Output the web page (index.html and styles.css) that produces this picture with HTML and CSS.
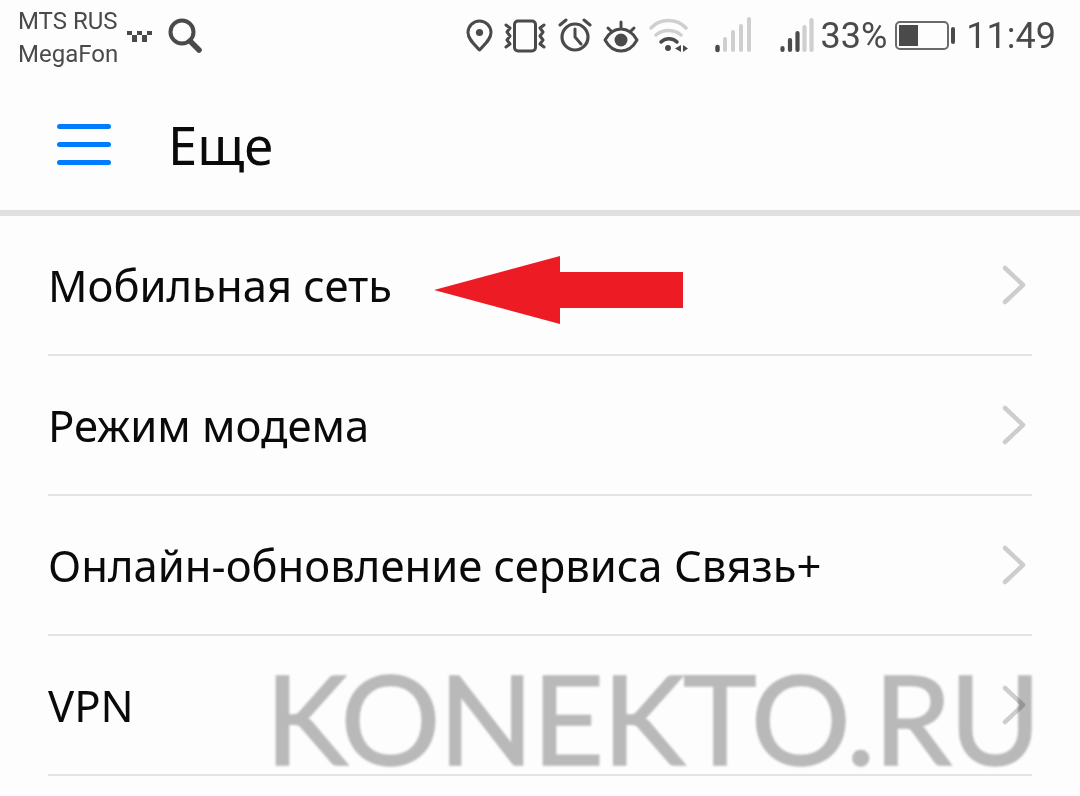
FILE: index.html
```html
<!doctype html>
<html lang="ru">
<head>
	<meta charset="UTF-8">
	<title>Еще</title>
	<link rel="stylesheet" href="styles.css">
</head>
<body>
	<div class="page">
		<div class="status">
			<div class="status-left">
				<div class="carrier">MTS RUS<br>MegaFon</div>
				<svg class="ic taxi" width="25" height="40" viewBox="0 0 25 40">
					<path fill="#4a4a4a" d="M0 15h5v4H0zM10 15h5v4h-5zM20 15h5v4h-5zM5 19h5v4H5zM15 19h5v4h-5zM5 23h5v3H5zM15 23h5v3h-5z"/>
				</svg>
				<svg class="ic search" width="34" height="40" viewBox="0 1 34 40">
					<circle cx="14" cy="17" r="11.500" fill="none" stroke="#4a4a4a" stroke-width="4"/>
					<path d="M22 26l9 9" stroke="#4a4a4a" stroke-width="5.500" stroke-linecap="round"/>
				</svg>
			</div>
			<div class="status-right">
				<svg class="ic" width="27" height="40" viewBox="0 0 27 40">
					<path d="M13.500 34C8 28 2 23 2 16.500a11.500 11.500 0 0 1 23 0C25 23 19 28 13.500 34z" fill="none" stroke="#4a4a4a" stroke-width="3" stroke-linejoin="round"/>
					<circle cx="13.500" cy="16.500" r="3.600" fill="#4a4a4a"/>
				</svg>
				<svg class="ic vib" width="42" height="40" viewBox="0 0 42 40">
					<rect x="10.500" y="5" width="21" height="30" rx="3.500" fill="none" stroke="#4a4a4a" stroke-width="3"/>
					<path d="M2 9l4 3-3 4 3 4-3 4 3 4-4 3M40 9l-4 3 3 4-3 4 3 4-3 4 4 3" fill="none" stroke="#4a4a4a" stroke-width="3" stroke-linecap="round" stroke-linejoin="round"/>
				</svg>
				<svg class="ic alarm" width="34" height="40" viewBox="0 0 34 40">
					<circle cx="17" cy="21" r="13" fill="none" stroke="#4a4a4a" stroke-width="3.200"/>
					<path d="M17 13v8l6 7M2 9l6-5M32 9l-6-5" fill="none" stroke="#4a4a4a" stroke-width="3" stroke-linecap="round"/>
				</svg>
				<svg class="ic eye" width="36" height="40" viewBox="0 0 36 40">
					<path d="M2 24C7 15 13 13 18 13s11 2 16 11C29 33 23 35 18 35S7 33 2 24z" fill="none" stroke="#4a4a4a" stroke-width="3" stroke-linejoin="round"/>
					<circle cx="18" cy="24" r="6.500" fill="#4a4a4a"/>
					<path d="M18 6v5M5 12l4 4M31 12l-4 4" stroke="#4a4a4a" stroke-width="3" stroke-linecap="round"/>
				</svg>
				<svg class="ic wifi" width="40" height="40" viewBox="0 0 40 40">
					<path d="M2 12C11 2 28 2 37 12" fill="none" stroke="#cfcfcf" stroke-width="3.500" stroke-linecap="round"/>
					<path d="M7 19c7-6 18-6 25 0" fill="none" stroke="#cfcfcf" stroke-width="3.500" stroke-linecap="round"/>
					<path d="M12 26c4-4.500 12-4.500 16 0" fill="none" stroke="#4a4a4a" stroke-width="3.500" stroke-linecap="round"/>
					<circle cx="19" cy="32" r="3" fill="#4a4a4a"/>
					<path d="M32 29v7l-6-3.500zM34 29v7l5-3.500z" fill="#4a4a4a"/>
				</svg>
				<svg class="ic sig1" width="36" height="40" viewBox="0 0 36 40">
					<path d="M10 34V23M18 34V16M26 34V10M34 34V3" fill="none" stroke="#cfcfcf" stroke-width="4" stroke-linecap="round"/>
					<path d="M2.500 34v-3" stroke="#4a4a4a" stroke-width="4.500" stroke-linecap="round"/>
				</svg>
				<svg class="ic sig2" width="34" height="40" viewBox="0 0 34 40">
					<path d="M2.500 34v-2M10 34V24M17.500 34V17" fill="none" stroke="#4a4a4a" stroke-width="4.200" stroke-linecap="round"/>
					<path d="M24.500 34V11M31.500 34V4" fill="none" stroke="#cfcfcf" stroke-width="4.200" stroke-linecap="round"/>
				</svg>
				<span class="pct">33%</span>
				<svg class="ic batt" width="60" height="40" viewBox="0 0 60 40">
					<rect x="1" y="6" width="52" height="27" rx="4" fill="none" stroke="#6a6a6a" stroke-width="2"/>
					<rect x="4" y="9" width="19" height="21" fill="#4a4a4a"/>
					<rect x="56" y="11" width="4" height="17" rx="2" fill="#4a4a4a"/>
				</svg>
				<span class="time">11:49</span>
			</div>
		</div>

		<div class="header">
			<div class="burger"><span></span><span></span><span></span></div>
			<div class="title">Еще</div>
		</div>

		<ul class="list">
			<li class="row">Мобильная сеть
				<svg class="red-arrow" width="250" height="70" viewBox="0 0 250 70">
					<path fill="#ed1c24" d="M1 35L127 1V17H250V53H127V69z"/>
				</svg>
				<svg class="chev" width="24" height="40" viewBox="0 0 24 40"><path d="M3 3l18 17L3 37"/></svg>
			</li>
			<li class="row">Режим модема
				<svg class="chev" width="24" height="40" viewBox="0 0 24 40"><path d="M3 3l18 17L3 37"/></svg>
			</li>
			<li class="row">Онлайн-обновление сервиса Связь+
				<svg class="chev" width="24" height="40" viewBox="0 0 24 40"><path d="M3 3l18 17L3 37"/></svg>
			</li>
			<li class="row">VPN
				<svg class="chev" width="24" height="40" viewBox="0 0 24 40"><path d="M3 3l18 17L3 37"/></svg>
			</li>
		</ul>

		<div class="watermark">KONEKTO.RU</div>
	</div>
</body>
</html>
```

FILE: styles.css
```css
* {
	margin: 0;
	padding: 0;
	box-sizing: border-box;
}
html, body {
	height: 100%;
	overflow: hidden;
	background: #fdfdfd;
}
.page {
	position: relative;
	width: 1080px;
	height: 796px;
	background: #fdfdfd;
	font-family: "Noto Sans", sans-serif;
	color: #0a0a0a;
}

/*---------- status bar ----------*/
.status {
	height: 90px;
	padding: 3px 24px 0 18px;
	display: flex;
	justify-content: space-between;
	align-items: flex-start;
	font-family: Roboto, sans-serif;
	color: #4a4a4a;
}
.status-left, .status-right {
	display: flex;
	align-items: center;
	height: 66px;
}
.ic {
	display: block;
}
.carrier {
	margin-top: 4px;
	font-size: 24px;
	line-height: 33px;
	white-space: nowrap;
}
.taxi { margin-left: 9px; }
.search { margin-left: 16px; }
.vib { margin-left: 11px; }
.alarm { margin-left: 12px; }
.eye { margin-left: 11px; }
.wifi { margin-left: 10px; }
.sig1 { margin-left: 26px; }
.sig2 { margin-left: 29px; }
.pct {
	margin-left: 7px;
	font-size: 36px;
}
.batt { margin-left: 8px; }
.time {
	margin-left: 11px;
	font-size: 36px;
}

/*---------- header ----------*/
.header {
	height: 126px;
	padding-bottom: 12px;
	border-bottom: 6px solid #e0e0e0;
	display: flex;
	align-items: center;
	padding-left: 57px;
}
.burger {
	width: 54px;
	display: flex;
	flex-direction: column;
	gap: 13px;
}
.burger span {
	display: block;
	height: 5px;
	border-radius: 3px;
	background: #007dff;
}
.title {
	margin-left: 57px;
	font-size: 52.500px;
}

/*---------- list ----------*/
.list {
	list-style: none;
	margin: 0 48px;
}
.row {
	position: relative;
	height: 140px;
	border-bottom: 2px solid #e4e4e4;
	display: flex;
	align-items: center;
	justify-content: space-between;
	font-size: 43.600px;
}
.chev {
	margin-right: 6px;
}
.chev path {
	fill: none;
	stroke: #cdcdcd;
	stroke-width: 4.500;
	stroke-linecap: round;
	stroke-linejoin: round;
}
.red-arrow {
	position: absolute;
	left: 385px;
	top: 39px;
}

/*---------- watermark ----------*/
.watermark {
	position: absolute;
	left: 265px;
	top: 642px;
	font-family: Lato, sans-serif;
	font-size: 125px;
	line-height: 150px;
	letter-spacing: -2px;
	white-space: nowrap;
	color: #bbbbbb;
	-webkit-text-stroke: 1.500px #bbbbbb;
	mix-blend-mode: multiply;
	filter: blur(1px);
}
```
